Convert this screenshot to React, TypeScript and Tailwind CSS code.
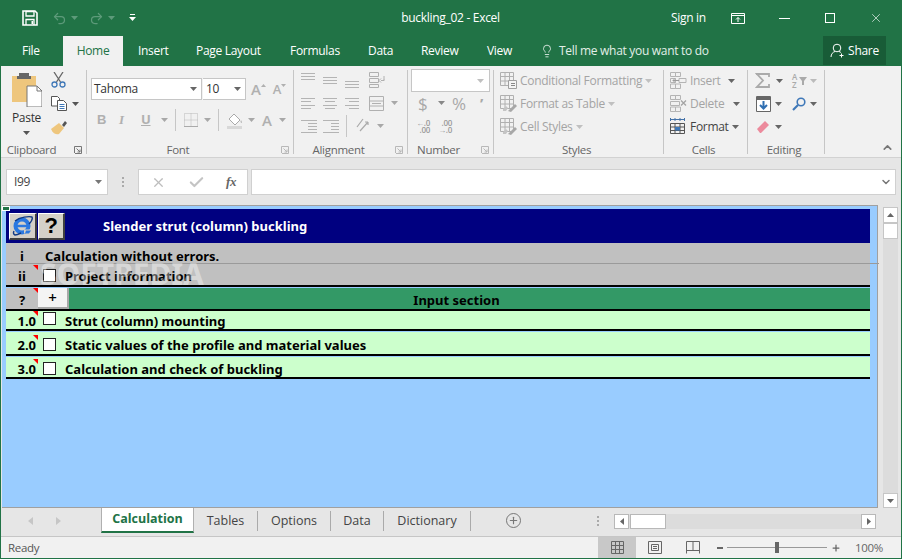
import React from "react";
import { Undo2, Redo2, X, Lightbulb, ChevronDown, ChevronUp, Plus, Check } from "lucide-react";

const SF = "font-['Noto_Sans'] tracking-normal text-[13px] font-bold text-black";

function Caret({ c = "#a8a8a8", ml = "ml-0" }: { c?: string; ml?: string }) {
  return (
    <svg width="7" height="4" viewBox="0 0 7 4" className={`shrink-0 ${ml}`}>
      <path d="M0 0h7L3.500 4z" fill={c} />
    </svg>
  );
}
function Launcher({ c = "#b0b0b0" }: { c?: string }) {
  return (
    <svg width="8" height="8" viewBox="0 0 8 8" className="shrink-0">
      <path d="M.5 7V.5H7.500V7.500H1" fill="none" stroke={c} />
      <path d="M2.500 2.500L6 6M6 3.500V6H3.500" fill="none" stroke={c} />
    </svg>
  );
}
function Lines({ rows, w = 14, c = "#b4b4b4" }: { rows: [number, number, number][]; w?: number; c?: string }) {
  return (
    <svg width={w} height="16" viewBox={`0 0 ${w} 16`} className="shrink-0">
      {rows.map(([y, x1, x2], i) => (
        <path key={i} d={`M${x1} ${y}.5H${x2}`} stroke={c} />
      ))}
    </svg>
  );
}
function Sep({ h = "h-[22px]", ml = "ml-2" }: { h?: string; ml?: string }) {
  return <div className={`w-px bg-[#c6c6c6] ${h} ${ml} shrink-0`} />;
}
function Group({
  w,
  label,
  launcher,
  dark,
  children,
}: {
  w: string;
  label: string;
  launcher?: boolean;
  dark?: boolean;
  children: React.ReactNode;
}) {
  return (
    <div className={`${w} shrink-0 h-[88px] mt-1 relative flex flex-col`}>
      <div className="absolute right-0 top-0 bottom-[4px] w-px bg-[#c6c6c6]" />
      <div className="flex-1 min-h-0">{children}</div>
      <div className="h-[16px] flex items-center pr-[5px]">
        <div className={`flex-1 text-center text-[11.500px] leading-none text-[#666] ${launcher ? "pr-3" : ""}`}>{label}</div>
        {launcher && <Launcher c={dark ? "#777" : "#b8b8b8"} />}
      </div>
    </div>
  );
}
function TableIcon({ kind }: { kind: number }) {
  return (
    <svg width="17" height="17" viewBox="0 0 17 17" className="shrink-0">
      <path d="M.5.5h13v13H.5zM.5 4.500h13M.5 9h13M5 .5v13M9.500.5v13" fill="none" stroke="#b0b0b0" />
      {kind === 0 && <path d="M8.500 8.500h8v8h-8z" fill="#f4f4f4" stroke="#a0a0a0" />}
      {kind === 0 && <path d="M11 11.500h4M11 13.500h4" stroke="#888" />}
      {kind > 0 && <path d="M8 16l7-7 2 2-6 6z" fill="#a8a8a8" />}
      {kind > 0 && <path d="M3 14l3-3 2 2-2 3H3z" fill="#c4c4c4" />}
    </svg>
  );
}
function CellIcon({ kind }: { kind: "i" | "d" | "f" }) {
  if (kind === "f")
    return (
      <svg width="17" height="17" viewBox="0 0 17 17" className="shrink-0">
        <path d="M.5 1.500h14M.5 0v3M5 0v3M10 0v3M14.500 0v3" stroke="#4472a8" fill="none" />
        <path d="M.5 5.500h14v10H.5zM.5 9h14M.5 12.500h14M5 5.500v10M10 5.500v10" fill="none" stroke="#555" />
        <path d="M5 9h5v3.500H5z" fill="#3f78b8" />
      </svg>
    );
  return (
    <svg width="17" height="17" viewBox="0 0 17 17" className="shrink-0">
      <path d="M.5.500h5v4h-5zM5.500.5h5v4h-5zM.5 12h5v4.500h-5zM5.500 12h5v4.500h-5z" fill="none" stroke="#b4b4b4" />
      {kind === "i" ? (
        <>
          <path d="M.5 6.500h5v4h-5zM9 6.500h7v4H9z" fill="none" stroke="#b4b4b4" />
          <path d="M9 8.500H3M5 6.500l-2 2 2 2" fill="none" stroke="#9a9a9a" />
        </>
      ) : (
        <>
          <path d="M.5 6.500h9v4h-9z" fill="none" stroke="#b4b4b4" />
          <path d="M11 5.500l5 5M16 5.500l-5 5" stroke="#a4a4a4" strokeWidth="1.300" />
        </>
      )}
    </svg>
  );
}
function Tri() {
  return <div className="absolute right-0 top-0 w-0 h-0 border-t-[5px] border-l-[5px] border-t-[#ff0000] border-l-transparent" />;
}
function Row({ n, text, h, boxMt, textMt }: { n: string; text: string; h: string; boxMt: string; textMt: string }) {
  return (
    <div className={`flex bg-[#ccffcc] border-b-2 border-black mb-px ${h}`}>
      <div className={`relative w-[32px] shrink-0 text-right pr-[2px] leading-[20px] ${textMt} ${SF}`}>
        {n}
        <Tri />
      </div>
      <div className={`ml-[5px] w-[13px] h-[13px] shrink-0 bg-white border border-[#222] ${boxMt}`} />
      <span className={`ml-[9px] leading-[20px] whitespace-nowrap ${textMt} ${SF}`}>{text}</span>
    </div>
  );
}

export default function App() {
  return (
    <div className="w-[902px] h-[559px] overflow-hidden flex flex-col bg-[#217346] pl-px pr-px pb-px text-[12px] font-['Open_Sans'] tracking-[-0.3px]">
      {/* Title bar */}
      <div className="h-[36px] shrink-0 flex items-center text-white relative">
        <svg width="16" height="16" viewBox="0 0 16 16" className="ml-[21px] shrink-0">
          <path d="M1 1h12l2 2v12H1z" fill="none" stroke="#fff" strokeWidth="1.600" />
          <path d="M4 1.500h8v4.500H4zM4 15V9.500h8V15" fill="none" stroke="#fff" strokeWidth="1.300" />
          <path d="M9.500 11h1.500v3H9.500z" fill="#fff" />
        </svg>
        <Undo2 size={15} strokeWidth={2} className="ml-[14px] text-[#5d9a7a]" />
        <Caret c="#5d9a7a" ml="ml-[4px]" />
        <Redo2 size={15} strokeWidth={2} className="ml-[11px] text-[#5d9a7a]" />
        <Caret c="#5d9a7a" ml="ml-[4px]" />
        <svg width="7" height="8" viewBox="0 0 7 8" className="ml-[14px] shrink-0">
          <path d="M1 .500h5" stroke="#fff" />
          <path d="M0 3h7L3.500 7z" fill="#fff" />
        </svg>
        <div className="ml-[263px] w-[103px] text-center whitespace-nowrap">buckling_02 - Excel</div>
        <div className="ml-[169px] whitespace-nowrap">Sign in</div>
        <svg width="14" height="11" viewBox="0 0 14 11" className="ml-[25px] shrink-0">
          <path d="M.5.500h13v10H.5zM.5 2.500h13" fill="none" stroke="#fff" />
          <path d="M7 9V4.500M5 6.500l2-2 2 2" fill="none" stroke="#fff" />
        </svg>
        <div className="ml-[34px] w-[11px] h-px bg-white" />
        <div className="ml-[35px] w-[10px] h-[10px] border border-white" />
        <X size={14} strokeWidth={1.100} className="ml-[34px]" />
      </div>
      {/* Tabs */}
      <div className="h-[30px] shrink-0 flex items-stretch text-white whitespace-nowrap">
        <div className="ml-[21px] w-[18px] flex items-center">File</div>
        <div className="ml-[23px] w-[60px] bg-[#f1f1f1] text-[#217346] flex items-center justify-center">Home</div>
        <div className="ml-[15px] w-[29px] flex items-center">Insert</div>
        <div className="ml-[29px] w-[65px] flex items-center">Page Layout</div>
        <div className="ml-[29px] w-[49px] flex items-center">Formulas</div>
        <div className="ml-[29px] w-[24px] flex items-center">Data</div>
        <div className="ml-[29px] w-[37px] flex items-center">Review</div>
        <div className="ml-[29px] w-[25px] flex items-center">View</div>
        <Lightbulb size={14} strokeWidth={1.300} className="ml-[28px] self-center" />
        <div className="ml-[5px] w-[151px] flex items-center text-[#e2efe8]">Tell me what you want to do</div>
        <div className="ml-[113px] w-[63px] mb-px bg-[#185c37] flex items-center justify-center gap-[3px]">
          <svg width="15" height="15" viewBox="0 0 15 15" className="shrink-0">
            <circle cx="7" cy="5" r="3.800" fill="none" stroke="#fff" />
            <path d="M1 14c0-3 2-5 4-5.500M9 8.500c1 .3 1.500.7 2 1.200" fill="none" stroke="#fff" />
            <path d="M11.500 10.500v4M9.500 12.500h4" stroke="#fff" />
          </svg>
          Share
        </div>
      </div>
      {/* Ribbon */}
      <div className="h-[92px] shrink-0 bg-[#f1f1f1] border-b border-[#d2d2d2] flex text-[#666]">
        <Group w="w-[86px]" label="Clipboard" launcher dark>
          <div className="flex">
            <div className="w-[49px] flex flex-col items-center pt-[3px] pl-[3px] pr-[1px]">
              <svg width="30" height="34" viewBox="0 0 30 34" className="shrink-0">
                <path d="M0 3h24v26H0z" fill="#eec67d" />
                <path d="M7 3h10V0H7zM5 3h14v3H5z" fill="#666" />
                <path d="M15 13h10l5 5v16H15z" fill="#fff" stroke="#777" />
                <path d="M25 13v5h5" fill="none" stroke="#777" />
              </svg>
              <span className="text-[#333] leading-[16px] mt-[3px]">Paste</span>
              <div className="mt-[5px]">
                <Caret c="#555" />
              </div>
            </div>
            <div className="flex flex-col pl-[1px] pt-[2px]">
              <svg width="15" height="16" viewBox="0 0 15 16" className="shrink-0">
                <path d="M3 0l6.500 10M12 0L5.500 10" stroke="#666" strokeWidth="1.300" />
                <circle cx="3.500" cy="12.500" r="2.500" fill="none" stroke="#3f78b8" strokeWidth="1.300" />
                <circle cx="11.500" cy="12.500" r="2.500" fill="none" stroke="#3f78b8" strokeWidth="1.300" />
              </svg>
              <div className="flex items-center mt-[8px]">
                <svg width="16" height="15" viewBox="0 0 16 15" className="shrink-0">
                  <path d="M.5.500h6l2 2V10H.5z" fill="#fff" stroke="#555" />
                  <path d="M6.500 4.500h6l3 3v7h-9z" fill="#fff" stroke="#555" />
                  <path d="M8.500 8.500h5M8.500 10.500h5M8.500 12.500h5" stroke="#3f78b8" />
                </svg>
                <Caret c="#555" ml="ml-[5px]" />
              </div>
              <svg width="17" height="16" viewBox="0 0 17 16" className="mt-[8px] shrink-0">
                <path d="M11 6l3-4 2 2-3 4z" fill="#555" />
                <path d="M0 10l8-6 5 5-5 6c-2 1-6 0-8-5z" fill="#eec67d" />
              </svg>
            </div>
          </div>
        </Group>
        <Group w="w-[207px]" label="Font" launcher>
          <div className="flex items-center pt-[8px] pl-[4px]">
            <div className="w-[111px] h-[22px] bg-white border border-[#c6c6c6] flex items-center pl-[2px] pr-[4px] text-[#333]">
              <span className="flex-1">Tahoma</span>
              <Caret c="#666" />
            </div>
            <div className="w-[43px] h-[22px] bg-white border border-[#c6c6c6] border-l-0 flex items-center pl-[3px] pr-[4px] text-[#333] ml-px">
              <span className="flex-1">10</span>
              <Caret c="#666" />
            </div>
            <span className="ml-[5px] text-[15px] font-semibold text-[#b0b0b0] leading-none">A</span>
            <svg width="5" height="3" viewBox="0 0 5 3" className="mb-[8px] shrink-0">
              <path d="M0 3h5L2.500 0z" fill="#b0b0b0" />
            </svg>
            <span className="ml-[7px] text-[13px] font-semibold text-[#b0b0b0] leading-none">A</span>
            <svg width="5" height="3" viewBox="0 0 5 3" className="mb-[8px] shrink-0">
              <path d="M0 0h5L2.500 3z" fill="#b0b0b0" />
            </svg>
          </div>
          <div className="flex items-center pl-[10px] mt-[9px] text-[#b0b0b0] font-bold text-[13px] h-[22px]">
            <span className="w-[22px] font-['Liberation_Sans']">B</span>
            <span className="w-[22px] italic font-['Liberation_Serif']">I</span>
            <span className="w-[18px] underline">U</span>
            <Caret ml="ml-[2px]" />
            <Sep ml="ml-[7px]" />
            <svg width="14" height="14" viewBox="0 0 14 14" className="ml-[8px] shrink-0">
              <path d="M.5.500h13v13H.5zM7 .5v13M.5 7h13" fill="none" stroke="#b8b8b8" strokeDasharray="1 1" />
              <path d="M0 13.500h14" stroke="#aaa" />
            </svg>
            <Caret ml="ml-[6px]" />
            <Sep ml="ml-[7px]" />
            <svg width="16" height="17" viewBox="0 0 16 17" className="ml-[8px] shrink-0">
              <path d="M2 7l5-5 6 6-5 5z" fill="#fff" stroke="#aaa" />
              <path d="M14 8c1 2 1 3 .5 3S13 10 14 8z" fill="#aaa" />
              <path d="M0 14h15v3H0z" fill="#d8d8d8" />
            </svg>
            <Caret ml="ml-[5px]" />
            <span className="ml-[7px] text-[15px] w-[12px] font-semibold">A</span>
            <Caret ml="ml-[5px]" />
          </div>
        </Group>
        <Group w="w-[114px]" label="Alignment" launcher>
          <div className="flex flex-col pl-[7px] pt-[2px] gap-[7px]">
            <div className="flex items-center h-[16px]">
              <Lines rows={[[1, 0, 14], [4, 0, 14], [7, 0, 14]]} />
              <div className="w-[8px]" />
              <Lines rows={[[5, 0, 14], [8, 0, 14], [11, 0, 14]]} />
              <div className="w-[8px]" />
              <Lines rows={[[9, 0, 14], [12, 0, 14], [15, 0, 14]]} />
              <svg width="16" height="16" viewBox="0 0 16 16" className="ml-[10px] shrink-0">
                <path d="M.5.500h9v4h-9zM.5 6.500h9v4h-9zM.5 12.500h9v3h-9zM12 8.500h3V4M15 8.500v-1M12 6.500l-2 2 2 2" fill="none" stroke="#b0b0b0" />
              </svg>
            </div>
            <div className="flex items-center h-[16px]">
              <Lines rows={[[3, 0, 14], [6, 0, 10], [10, 0, 14], [13, 0, 10]]} />
              <div className="w-[8px]" />
              <Lines rows={[[3, 0, 14], [6, 2, 12], [10, 0, 14], [13, 2, 12]]} />
              <div className="w-[8px]" />
              <Lines rows={[[3, 0, 14], [6, 4, 14], [10, 0, 14], [13, 4, 14]]} />
              <svg width="15" height="15" viewBox="0 0 15 15" className="ml-[10px] shrink-0">
                <path d="M.5.500h14v14H.5zM.5 5h14M.5 10h14" fill="none" stroke="#b0b0b0" />
                <path d="M3 7.500h9" stroke="#b0b0b0" />
              </svg>
              <Caret ml="ml-[7px]" />
            </div>
            <div className="flex items-center h-[16px]">
              <Lines w={16} rows={[[2, 0, 16], [5, 7, 16], [8, 7, 16], [11, 7, 16], [14, 0, 16]]} />
              <div className="w-[6px]" />
              <Lines w={16} rows={[[2, 0, 16], [5, 8, 16], [8, 8, 16], [11, 8, 16], [14, 0, 16]]} />
              <Sep ml="ml-[7px]" />
              <svg width="16" height="16" viewBox="0 0 16 16" className="ml-[8px] shrink-0">
                <path d="M2 9l6-8M5 13L13 4M13 4V7M13 4H10" fill="none" stroke="#aaa" strokeWidth="1.200" />
              </svg>
              <Caret ml="ml-[6px]" />
            </div>
          </div>
        </Group>
        <Group w="w-[86px]" label="Number" launcher>
          <div className="pl-[3px] -mt-px">
            <div className="w-[79px] h-[23px] bg-white border border-[#c6c6c6] flex items-center justify-end pr-[5px]">
              <Caret c="#c0c0c0" />
            </div>
            <div className="flex items-center h-[22px] pl-[7px] text-[#a8a8a8]">
              <span className="text-[17px] w-[11px] leading-none">$</span>
              <Caret c="#888" ml="ml-[9px]" />
              <span className="text-[17px] ml-[7px] w-[14px] leading-none">%</span>
              <span className="text-[15px] font-bold ml-[14px] leading-none">’</span>
            </div>
            <div className="flex items-center mt-[5px] pl-[3px] text-[8px] leading-[7px] text-[#999] font-semibold">
              <div className="w-[22px] text-right pr-[6px]">
                ←.0
                <br />
                .00
              </div>
              <div className="w-[16px] text-right">
                .00
                <br />
                →.0
              </div>
            </div>
          </div>
        </Group>
        <Group w="w-[170px]" label="Styles">
          <div className="flex flex-col pl-[6px] pt-[2px] gap-[6px] text-[#a4a4a4]">
            <div className="flex items-center h-[17px] gap-[3px]">
              <TableIcon kind={0} />
              <span className="whitespace-nowrap">Conditional Formatting</span>
              <Caret c="#c0c0c0" />
            </div>
            <div className="flex items-center h-[17px] gap-[3px]">
              <TableIcon kind={1} />
              <span className="whitespace-nowrap">Format as Table</span>
              <Caret c="#c0c0c0" />
            </div>
            <div className="flex items-center h-[17px] gap-[3px]">
              <TableIcon kind={2} />
              <span className="whitespace-nowrap">Cell Styles</span>
              <Caret c="#c0c0c0" />
            </div>
          </div>
        </Group>
        <Group w="w-[84px]" label="Cells">
          <div className="flex flex-col pl-[6px] pt-[2px] gap-[6px]">
            <div className="flex items-center h-[17px]">
              <CellIcon kind="i" />
              <span className="ml-[3px] w-[38px] text-[#a4a4a4]">Insert</span>
              <Caret c="#666" />
            </div>
            <div className="flex items-center h-[17px]">
              <CellIcon kind="d" />
              <span className="ml-[3px] w-[43px] text-[#a4a4a4]">Delete</span>
              <Caret c="#666" />
            </div>
            <div className="flex items-center h-[17px]">
              <CellIcon kind="f" />
              <span className="ml-[3px] w-[42px] text-[#444]">Format</span>
              <Caret c="#666" />
            </div>
          </div>
        </Group>
        <Group w="w-[77px]" label="Editing">
          <div className="flex flex-col pl-[7px] pt-[2px] gap-[6px]">
            <div className="flex items-center h-[17px]">
              <svg width="15" height="15" viewBox="0 0 15 15" className="shrink-0">
                <path d="M1 1h13v3M14 1H2l6 6.500L2 14h12v-3" fill="none" stroke="#aaa" strokeWidth="1.800" />
              </svg>
              <Caret c="#666" ml="ml-[6px]" />
              <div className="ml-[9px] w-[7px] flex flex-col text-[8px] leading-[8px] text-[#aaa] font-semibold">
                <span>A</span>
                <span>Z</span>
              </div>
              <svg width="8" height="8" viewBox="0 0 8 8" className="shrink-0">
                <path d="M0 0h8L5 4v4H3V4z" fill="#aaa" />
              </svg>
              <Caret c="#bbb" ml="ml-[3px]" />
            </div>
            <div className="flex items-center h-[17px]">
              <svg width="15" height="16" viewBox="0 0 15 16" className="ml-[1px] shrink-0">
                <path d="M.5.500h14v15H.5z" fill="#fff" stroke="#666" />
                <path d="M.5 1h14v3H.5z" fill="#666" />
                <path d="M7.500 5v7M4 9l3.500 3.500L11 9" fill="none" stroke="#2f6fb2" strokeWidth="2" />
              </svg>
              <Caret c="#666" ml="ml-[4px]" />
              <svg width="14" height="14" viewBox="0 0 14 14" className="ml-[10px] shrink-0">
                <circle cx="9" cy="5" r="3.800" fill="none" stroke="#3f78b8" strokeWidth="1.600" />
                <path d="M6 8l-5 5" stroke="#3f78b8" strokeWidth="2.200" />
              </svg>
              <Caret c="#666" ml="ml-[4px]" />
            </div>
            <div className="flex items-center h-[17px]">
              <svg width="14" height="14" viewBox="0 0 14 14" className="ml-[1px] shrink-0">
                <path d="M1 9l8-8 4 4-8 8H4z" fill="#ec8a9c" />
              </svg>
              <Caret c="#666" ml="ml-[5px]" />
            </div>
          </div>
        </Group>
        <div className="flex-1 flex items-end justify-end pr-[7px] pb-[3px]">
          <ChevronUp size={13} strokeWidth={3} className="text-[#777]" />
        </div>
      </div>
      {/* Formula bar */}
      <div className="h-[47px] shrink-0 bg-[#e6e6e6] flex items-start pt-[11px] pl-[5px]">
        <div className="w-[102px] h-[26px] bg-white border border-[#d0d0d0] flex items-center pl-[7px] pr-[5px] text-[#444]">
          <span className="flex-1">I99</span>
          <Caret c="#777" />
        </div>
        <div className="ml-[14px] mt-[8px] flex flex-col gap-[2px]">
          <div className="w-[2px] h-[2px] bg-[#aaa]" />
          <div className="w-[2px] h-[2px] bg-[#aaa]" />
          <div className="w-[2px] h-[2px] bg-[#aaa]" />
        </div>
        <div className="ml-[14px] w-[110px] h-[26px] bg-white border border-[#d0d0d0] flex items-center pl-[12px]">
          <X size={15} strokeWidth={2} className="text-[#bdbdbd]" />
          <Check size={17} strokeWidth={3} className="ml-[22px] text-[#c4c4c4]" />
          <span className="ml-[21px] text-[#666] italic font-['Liberation_Serif'] text-[13px] font-bold">fx</span>
        </div>
        <div className="ml-[3px] w-[645px] h-[26px] bg-white border border-[#d0d0d0] flex items-center justify-end pr-[3px]">
          <ChevronDown size={12} strokeWidth={3} className="text-[#777]" />
        </div>
      </div>
      {/* Sheet area */}
      <div className="h-[303px] shrink-0 bg-[#e6e6e6] flex pl-[1px]">
        <div className="w-[876px] h-[303px] shrink-0 relative bg-[#99ccff] border-t border-r border-b border-[#a0a0a0] pl-[4px] pt-[3px]">
          <div className="absolute left-0 top-0 w-[8px] h-[5px] bg-[#217346] border border-white" />
          <div className="w-[864px]">
            <div className="h-[34px] bg-[#000080] flex items-center">
              <div className="ml-[3px] w-[28px] h-[27px] bg-[#d4d0c8] border-t border-l border-white border-r-2 border-b-2 border-r-[#404040] border-b-[#404040] flex items-center justify-center">
                <svg width="22" height="21" viewBox="0 0 22 21">
                  <circle cx="10" cy="11" r="6.500" fill="none" stroke="#2a78e0" strokeWidth="4" />
                  <path d="M4 11h13" stroke="#2a78e0" strokeWidth="2.500" />
                  <path d="M12 14.500h8v4h-8z" fill="#d4d0c8" />
                  <path d="M14 15.500h5l-2 3h-4z" fill="#2a78e0" />
                  <path d="M3 6C8 2 17 1 20 2c1 2-1 5-3 7M2 16c-1 2-1 3 1 4 2 0 4-1 6-2" fill="none" stroke="#123a84" strokeWidth="1.400" />
                </svg>
              </div>
              <div className="w-[27px] h-[27px] ml-px bg-[#d4d0c8] border-t border-l border-white border-r-2 border-b-2 border-r-[#404040] border-b-[#404040] flex items-center justify-center text-black text-[22px] font-bold leading-none font-['Liberation_Sans']">
                ?
              </div>
              <span className={`ml-[38px] whitespace-nowrap mt-[1px] ${SF} text-white`}>Slender strut (column) buckling</span>
            </div>
            <div className="relative h-[22px] bg-[#c0c0c0] flex">
              <div className={`w-[32px] pt-[3px] text-center leading-[20px] ${SF}`}>i</div>
              <span className={`ml-[7px] mt-[3px] leading-[20px] whitespace-nowrap ${SF}`}>Calculation without errors.</span>
              <div className="absolute left-0 right-[-9px] bottom-px h-px bg-[#9a9a9a]" />
            </div>
            <div className="relative h-[22px] mb-px bg-[#c0c0c0] border-b-2 border-black flex">
              <div className={`relative w-[32px] pt-px text-center leading-[20px] ${SF}`}>
                ii
                <Tri />
              </div>
              <div className="ml-[5px] mt-[4px] w-[13px] h-[13px] shrink-0 bg-white border border-[#222]" />
              <span className={`ml-[9px] mt-px leading-[20px] whitespace-nowrap ${SF}`}>Project information</span>
              <div className="absolute left-[34px] -top-[6px] font-['Noto_Sans'] text-[30px] leading-none font-bold text-white/40 whitespace-nowrap tracking-normal">
                SOFTPEDIA
              </div>
            </div>
            <div className="flex h-[23px] bg-[#339966] border-b-2 border-black">
              <div className={`relative w-[32px] bg-[#c0c0c0] pt-[2px] text-center leading-[20px] ${SF}`}>
                ?
                <Tri />
              </div>
              <div className="w-[31px] h-[21px] bg-[#f4f4f4] border-r-2 border-b-2 border-[#a8a8a8] text-center text-black text-[15px] leading-[19px] font-semibold">+</div>
              <div className={`flex-1 text-center pt-[2px] pr-[26px] leading-[20px] ${SF}`}>Input section</div>
            </div>
            <Row n="1.0" text="Strut (column) mounting" h="h-[20px]" boxMt="mt-[1px]" textMt="mt-0" />
            <Row n="2.0" text="Static values of the profile and material values" h="h-[24px]" boxMt="mt-[6px]" textMt="mt-[3px]" />
            <Row n="3.0" text="Calculation and check of buckling" h="h-[22px]" boxMt="mt-[5px]" textMt="mt-[2px]" />
          </div>
        </div>
        <div className="ml-[5px] mt-[2px] w-[15px] h-[301px] bg-[#dcdcdc] flex flex-col">
          <div className="h-[16px] bg-white border border-[#c6c6c6] flex items-center justify-center">
            <svg width="7" height="4" viewBox="0 0 7 4"><path d="M0 4h7L3.500 0z" fill="#666" /></svg>
          </div>
          <div className="h-[16px] bg-white border border-[#c6c6c6]" />
          <div className="flex-1" />
          <div className="h-[15px] bg-white border border-[#c6c6c6] flex items-center justify-center">
            <Caret c="#666" />
          </div>
        </div>
      </div>
      {/* Sheet tabs */}
      <div className="h-[29px] shrink-0 bg-[#e6e6e6] border-b border-[#c6c6c6] flex items-start text-[#444] text-[12.500px] tracking-normal whitespace-nowrap">
        <svg width="5" height="8" viewBox="0 0 5 8" className="ml-[27px] mt-[9px] shrink-0"><path d="M5 0v8L0 4z" fill="#c6c6c6" /></svg>
        <svg width="5" height="8" viewBox="0 0 5 8" className="ml-[23px] mt-[9px] shrink-0"><path d="M0 0v8l5-4z" fill="#c6c6c6" /></svg>
        <div className="ml-[40px] w-[93px] h-[25px] bg-white border-l border-r border-[#b0b0b0] border-b-2 border-b-[#217346] text-[#217346] font-bold flex items-center justify-center">Calculation</div>
        <div className="w-[64px] h-[20px] mt-[3px] border-r border-[#aaa] flex items-center justify-center">Tables</div>
        <div className="w-[73px] h-[20px] mt-[3px] border-r border-[#aaa] flex items-center justify-center">Options</div>
        <div className="w-[53px] h-[20px] mt-[3px] border-r border-[#aaa] flex items-center justify-center">Data</div>
        <div className="w-[87px] h-[20px] mt-[3px] border-r border-[#aaa] flex items-center justify-center">Dictionary</div>
        <div className="ml-[35px] mt-[5px] w-[15px] h-[15px] rounded-full border border-[#777] flex items-center justify-center">
          <Plus size={11} strokeWidth={2.500} className="text-[#777]" />
        </div>
        <div className="ml-[76px] mt-[8px] flex flex-col gap-[2px]">
          <div className="w-[2px] h-[2px] bg-[#aaa]" />
          <div className="w-[2px] h-[2px] bg-[#aaa]" />
          <div className="w-[2px] h-[2px] bg-[#aaa]" />
        </div>
        <div className="ml-[15px] mt-[6px] w-[262px] h-[15px] bg-[#dcdcdc] flex">
          <div className="w-[15px] bg-white border border-[#b8b8b8] flex items-center justify-center">
            <svg width="4" height="7" viewBox="0 0 4 7"><path d="M4 0v7L0 3.500z" fill="#666" /></svg>
          </div>
          <div className="w-[36px] ml-px bg-white border border-[#b8b8b8]" />
          <div className="flex-1" />
          <div className="w-[15px] bg-white border border-[#b8b8b8] flex items-center justify-center">
            <svg width="4" height="7" viewBox="0 0 4 7"><path d="M0 0v7l4-3.500z" fill="#666" /></svg>
          </div>
        </div>
      </div>
      {/* Status bar */}
      <div className="h-[21px] shrink-0 bg-[#f1f1f1] flex items-stretch text-[#555] text-[11.500px]">
        <div className="ml-[7px] w-[590px] flex items-center">Ready</div>
        <div className="w-[38px] bg-[#c8c8c8] flex items-center justify-center">
          <svg width="13" height="13" viewBox="0 0 13 13"><path d="M.5.500h12v12H.5zM4.500.5v12M8.500.5v12M.5 4.500h12M.5 8.500h12" fill="none" stroke="#666" /></svg>
        </div>
        <svg width="14" height="13" viewBox="0 0 14 13" className="ml-[12px] self-center shrink-0"><path d="M.5.500h13v12H.5zM3.500 3.500h7v6h-7zM5 5.500h4M5 7.500h4" fill="none" stroke="#666" /></svg>
        <svg width="14" height="13" viewBox="0 0 14 13" className="ml-[24px] self-center shrink-0"><path d="M.5 12.500V.5h13v12M.5 9.500h13M7 .5v9" fill="none" stroke="#666" /></svg>
        <div className="ml-[17px] self-center w-[6px] h-[2px] bg-[#666]" />
        <div className="ml-[4px] self-center w-[100px] h-px bg-[#999] flex justify-center items-center">
          <div className="w-[4px] h-[11px] bg-[#666] shrink-0" />
        </div>
        <Plus size={10} strokeWidth={3} className="ml-[4px] self-center text-[#666]" />
        <div className="ml-[14px] flex items-center text-[#666]">100%</div>
      </div>
    </div>
  );
}
